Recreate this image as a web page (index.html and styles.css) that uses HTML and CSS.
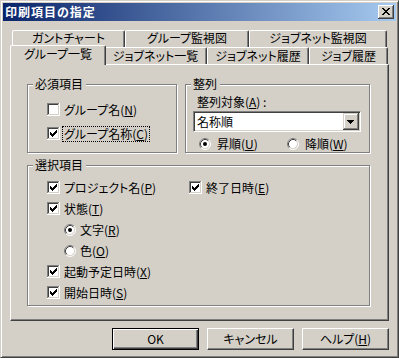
FILE: index.html
```html
<!DOCTYPE html>
<html lang="ja">
<head>
    <meta charset="UTF-8">
    <meta name="viewport" content="width=device-width, initial-scale=1.0">
    <title>印刷項目の指定</title>
    <link rel="stylesheet" href="styles.css">
</head>
<body>
    <!-- shared glyphs for the classic check boxes and radio buttons -->
    <svg class="defs" width="0" height="0">
        <symbol id="box" viewBox="0 0 13 13">
            <rect width="13" height="13" fill="#fff"/>
            <path d="M0 0h12v1h-11v11h-1z" fill="#808080"/>
            <path d="M1 1h10v1h-9v9h-1z" fill="#404040"/>
            <path d="M11 1h1v11h-11v-1h10z" fill="#d4d0c8"/>
        </symbol>
        <symbol id="tick" viewBox="0 0 13 13">
            <path d="M3 5h1v3h-1zM4 6h1v3h-1zM5 7h1v3h-1zM6 6h1v3h-1zM7 5h1v3h-1zM8 4h1v3h-1zM9 3h1v3h-1z"/>
        </symbol>
        <symbol id="ring" viewBox="0 0 12 12">
            <circle cx="6" cy="6" r="5" fill="#fff"/>
            <path d="M2.11 9.89A5.5 5.5 0 0 1 9.89 2.11" fill="none" stroke="#808080"/>
            <path d="M9.89 2.11A5.5 5.5 0 0 1 2.11 9.89" fill="none" stroke="#fff"/>
            <path d="M2.82 9.18A4.5 4.5 0 0 1 9.18 2.82" fill="none" stroke="#404040"/>
            <path d="M9.18 2.82A4.5 4.5 0 0 1 2.82 9.18" fill="none" stroke="#d4d0c8"/>
        </symbol>
        <symbol id="dot" viewBox="0 0 12 12">
            <circle cx="6" cy="6" r="2"/>
        </symbol>
    </svg>

    <div class="window">
        <div class="titlebar">
            <span class="title">印刷項目の指定</span>
            <svg class="close" width="16" height="14" viewBox="0 0 16 14">
                <rect width="16" height="14" fill="#404040"/>
                <rect width="15" height="13" fill="#fff"/>
                <rect x="1" y="1" width="14" height="12" fill="#808080"/>
                <rect x="1" y="1" width="13" height="11" fill="#d4d0c8"/>
                <path d="M4 3h2v1h-2zM10 3h2v1h-2zM5 4h2v1h-2zM9 4h2v1h-2zM6 5h4v1h-4zM7 6h2v1h-2zM6 7h4v1h-4zM5 8h2v1h-2zM9 8h2v1h-2zM4 9h2v1h-2zM10 9h2v1h-2z"/>
            </svg>
        </div>

        <div class="tabs">
            <div class="tab-row">
                <div class="tab" style="width: 113px">ガントチャート</div>
                <div class="tab" style="width: 124px">グループ監視図</div>
                <div class="tab" style="width: 138px">ジョブネット監視図</div>
            </div>
            <div class="tab-row front">
                <div class="tab active" style="width: 96px">グループ一覧</div>
                <div class="tab" style="width: 103px">ジョブネット一覧</div>
                <div class="tab" style="width: 102px">ジョブネット履歴</div>
                <div class="tab" style="width: 79px">ジョブ履歴</div>
            </div>

            <div class="panel">
                <div class="top-groups">
                    <div class="group required">
                        <span class="legend">必須項目</span>
                        <div class="opt">
                            <svg class="check" width="13" height="13"><use href="#box"/></svg>
                            <span class="label">グループ名(<u>N</u>)</span>
                        </div>
                        <div class="opt">
                            <svg class="check" width="13" height="13"><use href="#box"/><use href="#tick"/></svg>
                            <span class="label focus">グループ名称(<u>C</u>)</span>
                        </div>
                    </div>

                    <div class="group sort">
                        <span class="legend">整列</span>
                        <div class="field-label">整列対象(<u>A</u>) :</div>
                        <div class="combo">
                            <span>名称順</span>
                            <svg class="drop" width="16" height="17" viewBox="0 0 16 17">
                                <rect width="16" height="17" fill="#404040"/>
                                <rect width="15" height="16" fill="#d4d0c8"/>
                                <rect x="1" y="1" width="14" height="15" fill="#808080"/>
                                <rect x="1" y="1" width="13" height="14" fill="#fff"/>
                                <rect x="2" y="2" width="12" height="13" fill="#d4d0c8"/>
                                <path d="M4 7h7v1h-7zM5 8h5v1h-5zM6 9h3v1h-3zM7 10h1v1h-1z"/>
                            </svg>
                        </div>
                        <div class="radios">
                            <div class="opt first">
                                <svg class="radio" width="12" height="12"><use href="#ring"/><use href="#dot"/></svg>
                                <span class="label wide">昇順(<u>U</u>)</span>
                            </div>
                            <div class="opt">
                                <svg class="radio" width="12" height="12"><use href="#ring"/></svg>
                                <span class="label wide">降順(<u>W</u>)</span>
                            </div>
                        </div>
                    </div>
                </div>

                <div class="group select">
                    <span class="legend">選択項目</span>
                    <div class="grid">
                        <div class="opt">
                            <svg class="check" width="13" height="13"><use href="#box"/><use href="#tick"/></svg>
                            <span class="label">プロジェクト名(<u>P</u>)</span>
                        </div>
                        <div class="opt">
                            <svg class="check" width="13" height="13"><use href="#box"/><use href="#tick"/></svg>
                            <span class="label">終了日時(<u>E</u>)</span>
                        </div>
                        <div class="opt">
                            <svg class="check" width="13" height="13"><use href="#box"/><use href="#tick"/></svg>
                            <span class="label">状態(<u>T</u>)</span>
                        </div>
                        <div class="opt sub">
                            <svg class="radio" width="12" height="12"><use href="#ring"/><use href="#dot"/></svg>
                            <span class="label">文字(<u>R</u>)</span>
                        </div>
                        <div class="opt sub">
                            <svg class="radio" width="12" height="12"><use href="#ring"/></svg>
                            <span class="label">色(<u>O</u>)</span>
                        </div>
                        <div class="opt">
                            <svg class="check" width="13" height="13"><use href="#box"/><use href="#tick"/></svg>
                            <span class="label">起動予定日時(<u>X</u>)</span>
                        </div>
                        <div class="opt">
                            <svg class="check" width="13" height="13"><use href="#box"/><use href="#tick"/></svg>
                            <span class="label">開始日時(<u>S</u>)</span>
                        </div>
                    </div>
                </div>
            </div>
        </div>

        <div class="buttons">
            <button class="btn default">OK</button>
            <button class="btn">キャンセル</button>
            <button class="btn">ヘルプ(<u>H</u>)</button>
        </div>
    </div>
</body>
</html>
```

FILE: styles.css
```css
/* classic dialog look */
body {
    margin: 0;
    background-color: #d4d0c8;
    font-family: "Noto Sans CJK JP", "Noto Sans", sans-serif;
    font-size: 12px;
    line-height: 14px;
    color: #000;
    font-feature-settings: "palt";
}

.defs {
    display: none;
}

svg {
    display: block;
    flex-shrink: 0;
}

u {
    text-underline-offset: 1px;
}

/* window frame */
.window {
    width: 399px;
    height: 358px;
    box-sizing: border-box;
    border: 1px solid;
    border-color: #d4d0c8 #404040 #404040 #d4d0c8;
    box-shadow: inset 1px 1px #fff, inset -1px -1px #808080;
    padding: 2px;
}

.titlebar {
    height: 18px;
    display: flex;
    align-items: center;
    justify-content: space-between;
    background: linear-gradient(to right, #0a246a, #a6caf0);
}

.title {
    color: #fff;
    font-weight: bold;
    letter-spacing: 1px;
    padding-left: 2px;
}

.close {
    margin-right: 2px;
}

/* tab control */
.tabs {
    margin: 9px 7px 0 7px;
}

.tab-row {
    display: flex;
    height: 17px;
    padding-left: 2px;
}

.tab {
    box-sizing: border-box;
    height: 17px;
    border: 1px solid;
    border-bottom: none;
    border-color: #fff #404040 #fff #fff;
    border-radius: 2px 2px 0 0;
    box-shadow: inset -1px 0 #808080;
    background-color: #d4d0c8;
    text-align: center;
    white-space: nowrap;
}

.front .tab {
    padding-top: 1px;
}

.tab.active {
    position: relative;
    z-index: 1;
    height: 20px;
    margin: -2px -2px 0 -2px;
}

.panel {
    height: 257px;
    box-sizing: border-box;
    border: 1px solid;
    border-color: #fff #404040 #404040 #fff;
    box-shadow: inset -1px -1px #808080;
    padding: 19px 16px 0 16px;
}

/* group boxes */
.top-groups {
    display: flex;
    gap: 8px;
}

.group {
    position: relative;
    box-sizing: border-box;
    border: 1px solid #808080;
    box-shadow: inset 1px 1px #fff, 1px 1px #fff;
}

.legend {
    position: absolute;
    top: -8px;
    left: 5px;
    padding: 0 3px 0 2px;
    background-color: #d4d0c8;
}

.required {
    width: 150px;
    height: 69px;
    padding: 18px 0 0 19px;
}

.required .opt + .opt {
    margin-top: 11px;
}

.sort {
    width: 185px;
    height: 69px;
    padding: 10px 0 0 7px;
}

.select {
    width: 343px;
    height: 141px;
    margin-top: 12px;
    padding: 11px 0 0 19px;
}

/* options */
.opt {
    display: flex;
    align-items: center;
    height: 13px;
}

.label {
    margin-left: 3px;
    padding: 0 1px;
    white-space: nowrap;
}

.label.wide {
    margin-left: 5px;
}

.label.focus {
    outline: 1px dotted #000;
}

.field-label {
    padding-left: 4px;
}

.combo {
    width: 168px;
    height: 21px;
    box-sizing: border-box;
    margin-top: 2px;
    border: 1px solid;
    border-color: #808080 #fff #fff #808080;
    box-shadow: inset 1px 1px #404040, inset -1px -1px #d4d0c8;
    background-color: #fff;
    padding: 1px 1px 1px 3px;
    display: flex;
    align-items: center;
    justify-content: space-between;
}

.radios {
    display: flex;
    margin-top: 5px;
    padding-left: 6px;
}

.radios .first {
    width: 88px;
}

.grid {
    display: grid;
    grid-template-columns: 142px auto;
    grid-auto-rows: 21px;
}

.grid .opt {
    height: 21px;
}

.grid .opt:nth-child(n+3) {
    grid-column: 1;
}

.opt.sub {
    padding-left: 17px;
}

/* dialog buttons */
.buttons {
    display: flex;
    justify-content: flex-end;
    gap: 8px;
    margin: 7px 7px 0 0;
}

.btn {
    width: 87px;
    height: 22px;
    box-sizing: border-box;
    padding: 0;
    font: inherit;
    color: #000;
    background-color: #d4d0c8;
    border: 1px solid;
    border-color: #fff #404040 #404040 #fff;
    box-shadow: inset -1px -1px #808080;
}

.btn.default {
    border-color: #000;
    box-shadow: inset 1px 1px #fff, inset -1px -1px #404040, inset -2px -2px #808080;
}
```
